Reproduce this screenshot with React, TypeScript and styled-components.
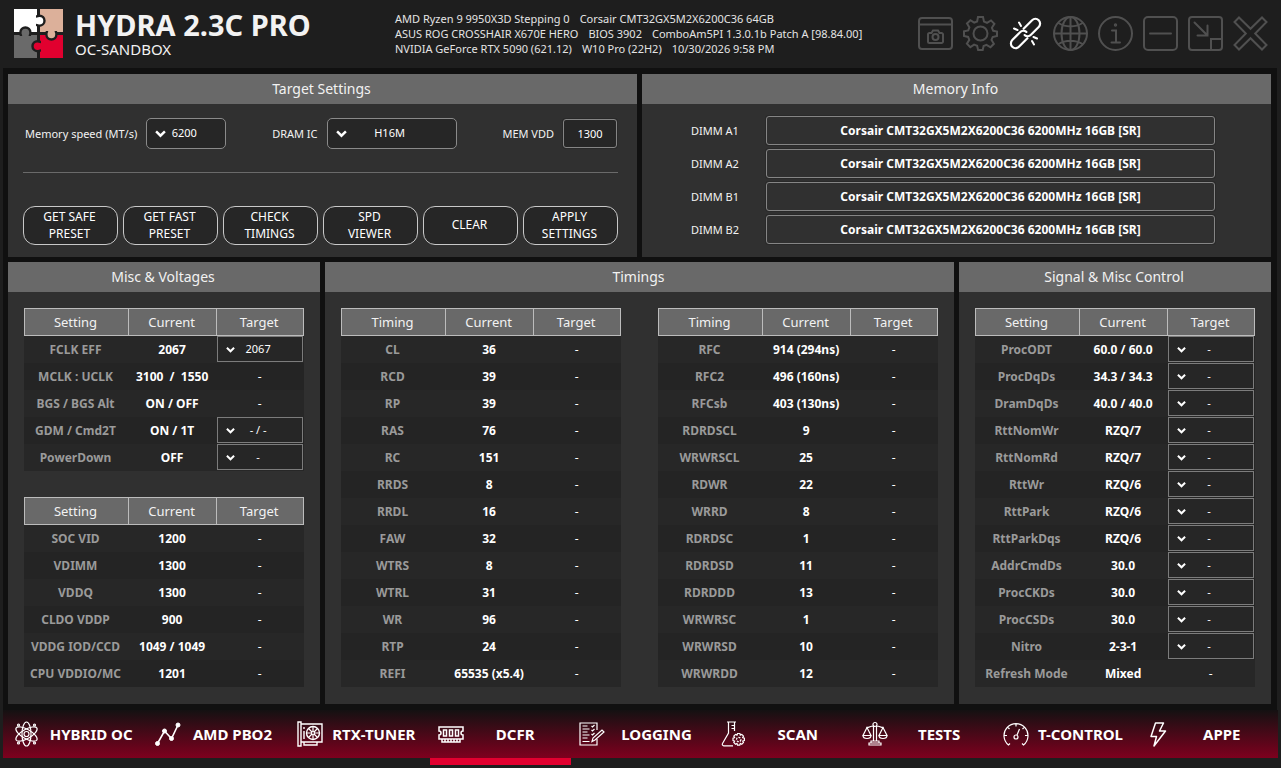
import React from "react";
import styled, { createGlobalStyle } from "styled-components";

const GlobalStyle = createGlobalStyle`
  * { box-sizing: border-box; }
  body {
    margin: 0;
    background: #1e1e1e;
    color: #f2f2f2;
    font-family: "Noto Sans", "Open Sans", sans-serif;
    font-size: 12px;
  }
  button, input, select { font-family: inherit; color: #fff; }
`;

const Page = styled.div`
  min-height: 100vh;
  display: flex;
  flex-direction: column;
`;

const Header = styled.header`
  height: 68px;
  display: flex;
  align-items: flex-start;
  padding: 9px 13px 0 14px;
`;

const Brand = styled.div`
  flex: 0 0 auto;
  width: 318px;
  margin-left: 12px;
`;

const AppTitle = styled.h1`
  margin: 0;
  font-size: 29px;
  line-height: 31px;
  font-weight: 700;
  white-space: nowrap;
`;

const AppSubtitle = styled.div`
  font-size: 15px;
  line-height: 18px;
`;

const SystemInfo = styled.div`
  flex: 1;
  margin-left: 2px;
  padding-top: 2px;
  font-size: 11px;
  line-height: 15px;
  color: #e4e4e4;
  white-space: nowrap;
`;

const InfoLine = styled.div`
  display: flex;
  gap: 10px;
`;

const Tools = styled.div`
  display: flex;
  gap: 10px;
  padding-top: 7px;
`;

const ToolButton = styled.button<{ $on?: boolean }>`
  width: 35px;
  height: 35px;
  padding: 0;
  border: 0;
  background: none;
  color: ${(p) => (p.$on ? "#ffffff" : "#505050")};
  svg { display: block; }
`;

const Main = styled.main`
  margin: 0 4px 0 3px;
  padding: 6px 6px 6px 5px;
  background: #101010;
  display: grid;
  gap: 5px;
`;

const TopRow = styled.div`
  display: grid;
  grid-template-columns: 1fr 1fr;
  gap: 5px;
`;

const BottomRow = styled.div`
  display: grid;
  grid-template-columns: 312fr 629fr 312fr;
  gap: 5px;
`;

const PanelBox = styled.section`
  background: #303030;
  min-width: 0;
`;

const PanelTitle = styled.h2`
  margin: 0;
  height: 30px;
  padding-right: 2px;
  line-height: 30px;
  background: #696969;
  text-align: center;
  font-size: 14px;
  font-weight: 400;
`;

const SettingsBody = styled.div`
  padding: 14px 19px 12px 15px;
`;

const FieldRow = styled.div`
  display: flex;
  justify-content: space-between;
  align-items: center;
  height: 31px;
  padding-right: 1px;
`;

const Field = styled.label`
  display: flex;
  align-items: center;
  gap: 9px;
  padding-left: 2px;
  font-size: 11px;
  white-space: nowrap;
`;

const Divider = styled.hr`
  margin: 23px 0 33px;
  border: 0;
  border-top: 1px solid #6a6a6a;
`;

const Actions = styled.div`
  display: grid;
  grid-template-columns: repeat(6, 1fr);
  gap: 5px;
`;

const ActionButton = styled.button`
  height: 39px;
  padding: 0 15px 2px 13px;
  border: 1px solid #c8c8c8;
  border-radius: 12px;
  background: #262626;
  font-size: 12px;
  line-height: 17px;
`;

const SelectShell = styled.span<{ $wide?: number; $boxed?: boolean }>`
  display: grid;
  align-items: center;
  width: ${(p) => (p.$wide ? p.$wide + "px" : "auto")};
  margin-right: ${(p) => (p.$boxed ? "0" : "1px")};
  > * { grid-area: 1 / 1; }
  svg {
    margin-left: 9px;
    pointer-events: none;
  }
`;

const Select = styled.select<{ $boxed?: boolean }>`
  appearance: none;
  width: 100%;
  height: ${(p) => (p.$boxed ? "31px" : "26px")};
  padding: 0 4px 2px 0;
  border: 1px solid ${(p) => (p.$boxed ? "#8a8a8a" : "#7c7c7c")};
  border-radius: ${(p) => (p.$boxed ? "5px" : "0")};
  background: #262626;
  font-size: 11px;
  text-align: center;
  text-align-last: center;
`;

const TextBox = styled.input<{ $bold?: boolean }>`
  width: ${(p) => (p.$bold ? "100%" : "54px")};
  height: 29px;
  padding: 0;
  border: 1px solid #858585;
  border-radius: 3px;
  box-shadow: 0 0 0 1px #292929;
  background: ${(p) => (p.$bold ? "#303030" : "#262626")};
  font-size: ${(p) => (p.$bold ? "12px" : "11px")};
  font-weight: ${(p) => (p.$bold ? 700 : 400)};
  text-align: center;
`;

const DimmList = styled.div`
  padding: 12px 56px 13px 49px;
  display: grid;
  gap: 4px;
`;

const Dimm = styled.label`
  display: grid;
  grid-template-columns: 75px 1fr;
  align-items: center;
  font-size: 11px;
`;

const Tables = styled.div<{ $side?: boolean }>`
  display: grid;
  grid-template-columns: ${(p) => (p.$side ? "1fr 1fr" : "1fr")};
  gap: ${(p) => (p.$side ? "37px" : "26px")};
  padding: 16px 16px 17px;
`;

const Table = styled.table`
  width: 100%;
  table-layout: fixed;
  border-collapse: separate;
  border-spacing: 0;
`;

const HeadCell = styled.th<{ $w: string }>`
  width: ${(p) => p.$w};
  height: 28px;
  padding: 0 2px 0 0;
  border: 1px solid #bcbcbc;
  background: #696969;
  font-size: 13px;
  font-weight: 400;
  & + & { border-left: 0; }
`;

const Row = styled.tr`
  background: #272727;
  &:nth-child(even) { background: #242424; }
`;

const Cell = styled.td<{ $kind: "name" | "value" | "target"; $select?: boolean }>`
  height: 27px;
  padding: 0 ${(p) => (p.$select ? "0" : "2px")} 0 0;
  vertical-align: ${(p) => (p.$select ? "top" : "middle")};
  text-align: center;
  white-space: nowrap;
  font-size: 12px;
  font-weight: ${(p) => (p.$kind === "target" ? 400 : 700)};
  color: ${(p) => (p.$kind === "name" ? "#9a9a9a" : "#ffffff")};
`;

const Nav = styled.nav`
  display: grid;
  grid-template-columns: repeat(9, 1fr);
  margin: 0 3px;
  padding-left: 3px;
  height: 48px;
  background: linear-gradient(#141112, #7e001e);
`;

const Tab = styled.button<{ $active?: boolean }>`
  height: ${(p) => (p.$active ? "55px" : "48px")};
  display: flex;
  align-items: center;
  padding: 0 5px 0 8px;
  border: 0;
  border-bottom: ${(p) => (p.$active ? "7px solid #e1002f" : "0")};
  background: none;
  font-size: 15px;
  font-weight: 700;
  white-space: nowrap;
  svg { flex: none; }
  span { flex: 1; text-align: center; }
`;

const Chevron = ({ size = 10 }: { size?: number }) => (
  <svg width={size} height={size} viewBox="0 0 10 10" fill="none" stroke="#fff" strokeWidth="2.2">
    <path d="M1 3l4 4 4-4" />
  </svg>
);

function Picker({ options, wide, label }: { options: string[]; wide?: number; label: string }) {
  const boxed = wide !== undefined;
  return (
    <SelectShell $wide={wide} $boxed={boxed}>
      <Select $boxed={boxed} aria-label={label} defaultValue={options[0]}>
        {options.map((o) => (
          <option key={o}>{o}</option>
        ))}
      </Select>
      <Chevron size={boxed ? 11 : 9} />
    </SelectShell>
  );
}

const Logo = () => (
  <svg width="49" height="49" viewBox="0 0 49 49">
    <path fill="#fff" d="M0 0h23v23H0z" />
    <path fill="#dcb09a" d="M26 0h23v23H26z" />
    <path fill="#6a6a6a" d="M0 26h23v23H0z" />
    <path fill="#e1002f" d="M26 26h23v23H26z" />
    <g stroke="#1e1e1e" strokeWidth="2.4">
      <path fill="#fff" d="M22 7.500c1.500 0 2-.8 3.500-.8a5 5 0 0 1 0 10c-1.500 0-2-.8-3.500-.8" />
      <path fill="#dcb09a" d="M33 22c0 1.500-1 2-.6 3.500a5 5 0 0 0 10 0c.4-1.500-.6-2-.6-3.500" />
      <path fill="#6a6a6a" d="M7 27c0-1.500-1-2-.6-3.500a5 5 0 0 1 10 0c.4 1.500-.6 2-.6 3.500" />
      <path fill="#e1002f" d="M27 33c-1.500 0-2-.8-3.500-.8a5 5 0 0 0 0 10c1.500 0 2-.8 3.500-.8" />
    </g>
  </svg>
);

const toolIcons: { name: string; on?: boolean; art: React.ReactNode }[] = [
  {
    name: "Screenshot",
    art: (
      <>
        <rect x="1" y="2" width="33" height="31" rx="3" />
        <path d="M1 8.500h33M10 18.500a1.500 1.500 0 0 1 1.500-1.500h2l1.500-2.500h5l1.500 2.500h2a1.500 1.500 0 0 1 1.500 1.500v7a1.500 1.500 0 0 1-1.500 1.500h-12a1.500 1.500 0 0 1-1.500-1.500z" />
        <circle cx="17.500" cy="21" r="3" />
      </>
    ),
  },
  {
    name: "Settings",
    art: (
      <>
        <path d="M15 1h5l1 4.600 3 1.200 4-2.400 3.400 3.500-2.500 3.900 1.300 3L34 15.500v4.500l-4.300 1-1.200 3 2.400 3.800-3.400 3.500-4-2.500-2.900 1.200L19.700 34h-4.600l-1-4.200-3-1.200-3.800 2.500-3.400-3.400 2.400-3.900-1.200-2.900L1 20v-4.600l4.200-1 1.200-3L4 7.500 7.400 4.200l3.800 2.500 2.900-1.200z" />
        <circle cx="17.500" cy="17.500" r="7" />
      </>
    ),
  },
  {
    name: "Link",
    on: true,
    art: (
      <>
        <g transform="translate(17.500 17.500) rotate(-45)" strokeWidth="2.200">
          <path d="M2 -4.700H14a4.700 4.700 0 0 1 0 9.400H3a4.700 4.700 0 0 1-4.700-4.200" />
          <path d="M-2 4.700H-14a4.700 4.700 0 0 1 0-9.400H-3a4.700 4.700 0 0 1 4.700 4.200" />
        </g>
        <path d="M11 6.500l2 3.500M6 12.500l3.500 1.500M24 25l2 3.500M25.500 21l3.500 1.500" />
      </>
    ),
  },
  {
    name: "Web",
    art: (
      <>
        <circle cx="17.500" cy="17.500" r="16.500" />
        <ellipse cx="17.500" cy="17.500" rx="9" ry="16.500" />
        <path d="M17.500 1v33M1 17.500h33M5.500 7c7 4.500 17 4.500 24 0M5.500 28c7-4.500 17-4.500 24 0" />
      </>
    ),
  },
  {
    name: "About",
    art: (
      <>
        <circle cx="17.500" cy="17.500" r="16.500" />
        <path d="M14 14.500h4V26M13.500 26.500h8.500" />
        <circle cx="17.500" cy="9" r=".7" />
      </>
    ),
  },
  {
    name: "Minimize",
    art: (
      <>
        <rect x="1" y="1" width="33" height="33" rx="4" />
        <path d="M7 17.500h21" />
      </>
    ),
  },
  {
    name: "Compact view",
    art: (
      <>
        <rect x="1" y="1" width="33" height="33" rx="3" />
        <path d="M6.500 6.500l13 13M19.500 9.500v10h-10M34 23H23v11" />
      </>
    ),
  },
  {
    name: "Close",
    art: <path d="M6 1.500l11.500 11.300L29 1.500 33.500 6 22.200 17.500 33.500 29 29 33.500 17.500 22.200 6 33.500 1.500 29l11.300-11.500L1.500 6z" />,
  },
];

const tabs: { name: string; art: React.ReactNode }[] = [
  {
    name: "HYBRID OC",
    art: (
      <g strokeWidth="1.200">
        <ellipse cx="12.500" cy="13" rx="4.500" ry="12" />
        <ellipse cx="12.500" cy="13" rx="4.500" ry="12" transform="rotate(60 12.500 13)" />
        <ellipse cx="12.500" cy="13" rx="4.500" ry="12" transform="rotate(-60 12.500 13)" />
        <circle cx="12.500" cy="13" r="2.500" />
        <circle cx="4.500" cy="4" r="1" />
        <circle cx="20.500" cy="4" r="1" />
        <circle cx="4.500" cy="22" r="1" />
        <circle cx="20.500" cy="22" r="1" />
      </g>
    ),
  },
  {
    name: "AMD PBO2",
    art: (
      <>
        <path d="M2.500 22.500l7-12.500 7 7.500 6.500-13.500" strokeWidth="1.600" />
        <g fill="currentColor" strokeWidth="1">
          <circle cx="2.500" cy="22.500" r="2" />
          <circle cx="9.500" cy="10" r="2" />
          <circle cx="16.500" cy="17.500" r="2" />
          <circle cx="23" cy="4" r="2" />
        </g>
      </>
    ),
  },
  {
    name: "RTX-TUNER",
    art: (
      <>
        <path d="M1 1h3v24H1zM4 3h21v18H4M7 21v3h13v-3M10 24h7M7 6v2M7 10v8" strokeWidth="1.400" />
        <circle cx="16" cy="12" r="6.500" strokeWidth="1.400" />
        <circle cx="16" cy="12" r="1.500" />
        <path d="M16 10.500V5.500M16 13.500V18.500M14.500 12H9.500M17.500 12H22.500M15 11l-3.500-3.500M17 13l3.500 3.500M17 11l3.500-3.500M15 13l-3.500 3.500" />
      </>
    ),
  },
  {
    name: "DCFR",
    art: (
      <g transform="translate(0 1)" strokeWidth="1.500">
        <path d="M1 5h24v4a2 2 0 0 0 0 4v4H1v-4a2 2 0 0 0 0-4zM4 17v3h18v-3M7 17v3M10 17v3M13 17v3M16 17v3M19 17v3" />
        <path d="M5.500 8h3v6h-3zM11.500 8h3v6h-3zM17.500 8h3v6h-3z" />
      </g>
    ),
  },
  {
    name: "LOGGING",
    art: (
      <>
        <path d="M18 9V2H1v22h17v-6M3.500 5h5M3.500 8h7M3.500 11h5M3.500 14h7M3.500 17h5M3.500 20.500h7" />
        <path d="M12.500 5l1 1 2-2M12.500 9l1 1 2-2M12.500 13l1 1 2-2M13 20.500l1-3.500 9-8 2 2-9 8z" />
      </>
    ),
  },
  {
    name: "SCAN",
    art: (
      <>
        <path d="M6 1h9M7.500 1v11L1.500 22.500a1.500 1.500 0 0 0 1.300 2.300H12M13.500 1v9M10.500 4.500h3M10.500 7.500h3" />
        <path d="M16.500 12.500h2.400l.4 1.600 1.500-.7 1.700 1.700-.8 1.500 1.700.5v2.400l-1.700.5.8 1.500-1.700 1.700-1.500-.8-.5 1.700h-2.300l-.5-1.700-1.500.8-1.700-1.700.8-1.500-1.600-.5v-2.400l1.600-.5-.8-1.500 1.700-1.700 1.500.7z" />
        <circle cx="17.700" cy="18.500" r="2.200" strokeDasharray="2 1" />
      </>
    ),
  },
  {
    name: "TESTS",
    art: (
      <>
        <path d="M11.500 4.500V20h3V4.500M11 5C8 5 8 6.500 4.500 6.500M15 5c3 0 3 1.500 6.500 1.500M9 20h8v2H9zM7 22h12v2H7z" />
        <circle cx="13" cy="3.500" r="2" />
        <path d="M5 6.500L1 14.500h8zM21 6.500l-4 8h8zM1 14.500a4 3 0 0 0 8 0M17 14.500a4 3 0 0 0 8 0" />
      </>
    ),
  },
  {
    name: "T-CONTROL",
    art: (
      <>
        <path d="M7 22.500l-1.500 1.500A12 12 0 1 1 20.500 24L19 22.500M13 2.500v3M4.500 6l2 2M21.500 6l-2 2M1 14.500h3M22 14.500h3M14 14l2.500-6" />
        <circle cx="13" cy="16" r="2" />
      </>
    ),
  },
  {
    name: "APPE",
    art: <path d="M10.500 2h8l-4 8h6L9 25l2.500-9.500H6z" strokeWidth="1.500" strokeLinejoin="round" />,
  },
];

type TargetSpec = string | string[];
type Entry = [string, string, TargetSpec?];

const misc: Entry[] = [
  ["FCLK EFF", "2067", ["2067"]],
  ["MCLK : UCLK", "3100  /  1550"],
  ["BGS / BGS Alt", "ON / OFF"],
  ["GDM / Cmd2T", "ON / 1T", ["- / -"]],
  ["PowerDown", "OFF", ["-"]],
];

const voltages: Entry[] = [
  ["SOC VID", "1200"],
  ["VDIMM", "1300"],
  ["VDDQ", "1300"],
  ["CLDO VDDP", "900"],
  ["VDDG IOD/CCD", "1049 / 1049"],
  ["CPU VDDIO/MC", "1201"],
];

const primary: Entry[] = [
  ["CL", "36"],
  ["RCD", "39"],
  ["RP", "39"],
  ["RAS", "76"],
  ["RC", "151"],
  ["RRDS", "8"],
  ["RRDL", "16"],
  ["FAW", "32"],
  ["WTRS", "8"],
  ["WTRL", "31"],
  ["WR", "96"],
  ["RTP", "24"],
  ["REFI", "65535 (x5.4)"],
];

const secondary: Entry[] = [
  ["RFC", "914 (294ns)"],
  ["RFC2", "496 (160ns)"],
  ["RFCsb", "403 (130ns)"],
  ["RDRDSCL", "9"],
  ["WRWRSCL", "25"],
  ["RDWR", "22"],
  ["WRRD", "8"],
  ["RDRDSC", "1"],
  ["RDRDSD", "11"],
  ["RDRDDD", "13"],
  ["WRWRSC", "1"],
  ["WRWRSD", "10"],
  ["WRWRDD", "12"],
];

const signal: Entry[] = [
  ["ProcODT", "60.0 / 60.0", ["-"]],
  ["ProcDqDs", "34.3 / 34.3", ["-"]],
  ["DramDqDs", "40.0 / 40.0", ["-"]],
  ["RttNomWr", "RZQ/7", ["-"]],
  ["RttNomRd", "RZQ/7", ["-"]],
  ["RttWr", "RZQ/6", ["-"]],
  ["RttPark", "RZQ/6", ["-"]],
  ["RttParkDqs", "RZQ/6", ["-"]],
  ["AddrCmdDs", "30.0", ["-"]],
  ["ProcCKDs", "30.0", ["-"]],
  ["ProcCSDs", "30.0", ["-"]],
  ["Nitro", "2-3-1", ["-"]],
  ["Refresh Mode", "Mixed"],
];

function DataTable({ first, rows }: { first: string; rows: Entry[] }) {
  return (
    <Table>
      <thead>
        <tr>
          <HeadCell $w="37.5%">{first}</HeadCell>
          <HeadCell $w="31.5%">Current</HeadCell>
          <HeadCell $w="31%">Target</HeadCell>
        </tr>
      </thead>
      <tbody>
        {rows.map(([name, value, target = "-"]) => (
          <Row key={name}>
            <Cell $kind="name">{name}</Cell>
            <Cell $kind="value">{value.replace(/ {2}/g, "\u00a0 ")}</Cell>
            <Cell $kind="target" $select={Array.isArray(target)}>
              {Array.isArray(target) ? <Picker options={target} label={name + " target"} /> : target}
            </Cell>
          </Row>
        ))}
      </tbody>
    </Table>
  );
}

function Panel({ title, children }: { title: string; children: React.ReactNode }) {
  return (
    <PanelBox>
      <PanelTitle>{title}</PanelTitle>
      {children}
    </PanelBox>
  );
}

const systemLines = [
  ["AMD Ryzen 9 9950X3D Stepping 0", "Corsair CMT32GX5M2X6200C36 64GB"],
  ["ASUS ROG CROSSHAIR X670E HERO", "BIOS 3902", "ComboAm5PI 1.3.0.1b Patch A [98.84.00]"],
  ["NVIDIA GeForce RTX 5090 (621.12)", "W10 Pro (22H2)", "10/30/2026 9:58 PM"],
];

const actions = ["GET SAFE PRESET", "GET FAST PRESET", "CHECK TIMINGS", "SPD VIEWER", "CLEAR", "APPLY SETTINGS"];

export default function App() {
  return (
    <Page>
      <GlobalStyle />
      <Header>
        <Logo />
        <Brand>
          <AppTitle>HYDRA 2.3C PRO</AppTitle>
          <AppSubtitle>OC-SANDBOX</AppSubtitle>
        </Brand>
        <SystemInfo>
          {systemLines.map((line) => (
            <InfoLine key={line[0]}>
              {line.map((part) => (
                <span key={part}>{part}</span>
              ))}
            </InfoLine>
          ))}
        </SystemInfo>
        <Tools>
          {toolIcons.map((t) => (
            <ToolButton key={t.name} $on={t.on} aria-label={t.name}>
              <svg width="35" height="35" viewBox="0 0 35 35" fill="none" stroke="currentColor" strokeWidth="2" strokeLinecap="round">
                {t.art}
              </svg>
            </ToolButton>
          ))}
        </Tools>
      </Header>
      <Main>
        <TopRow>
          <Panel title="Target Settings">
            <SettingsBody>
              <FieldRow>
                <Field>
                  Memory speed (MT/s)
                  <Picker options={["6200"]} wide={80} label="Memory speed" />
                </Field>
                <Field>
                  DRAM IC
                  <Picker options={["H16M"]} wide={130} label="DRAM IC" />
                </Field>
                <Field>
                  MEM VDD
                  <TextBox defaultValue="1300" />
                </Field>
              </FieldRow>
              <Divider />
              <Actions>
                {actions.map((a) => (
                  <ActionButton key={a}>{a}</ActionButton>
                ))}
              </Actions>
            </SettingsBody>
          </Panel>
          <Panel title="Memory Info">
            <DimmList>
              {["A1", "A2", "B1", "B2"].map((slot) => (
                <Dimm key={slot}>
                  DIMM {slot}
                  <TextBox $bold readOnly value="Corsair CMT32GX5M2X6200C36 6200MHz 16GB [SR]" />
                </Dimm>
              ))}
            </DimmList>
          </Panel>
        </TopRow>
        <BottomRow>
          <Panel title="Misc & Voltages">
            <Tables>
              <DataTable first="Setting" rows={misc} />
              <DataTable first="Setting" rows={voltages} />
            </Tables>
          </Panel>
          <Panel title="Timings">
            <Tables $side>
              <DataTable first="Timing" rows={primary} />
              <DataTable first="Timing" rows={secondary} />
            </Tables>
          </Panel>
          <Panel title="Signal & Misc Control">
            <Tables>
              <DataTable first="Setting" rows={signal} />
            </Tables>
          </Panel>
        </BottomRow>
      </Main>
      <Nav>
        {tabs.map((t) => (
          <Tab key={t.name} $active={t.name === "DCFR"}>
            <svg width="26" height="26" viewBox="0 0 26 26" fill="none" stroke="currentColor" strokeWidth="1.2">
              {t.art}
            </svg>
            <span>{t.name}</span>
          </Tab>
        ))}
      </Nav>
    </Page>
  );
}
